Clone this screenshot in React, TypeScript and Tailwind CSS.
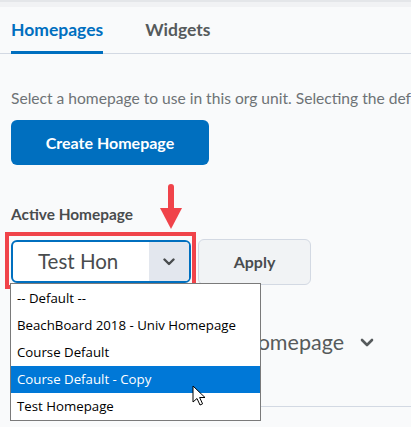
export default function App() {
  const options = [
    '-- Default --',
    'BeachBoard 2018 - Univ Homepage',
    'Course Default',
    'Course Default - Copy',
    'Test Homepage',
  ];

  return (
    <div className="relative w-[411px] h-[427px] overflow-hidden bg-[#f9fafb] font-['Lato',sans-serif]">
      {/* top strip */}
      <div className="h-[2px] bg-[#e4e6e9]" />
      <div className="h-[5px] bg-[#f1f2f4]" />

      {/* Tabs */}
      <div className="flex h-[47px] items-stretch gap-[42px] border-b border-[#d3d9e3] px-[11px]">
        <div className="relative flex items-center text-[17.5px] font-bold text-[#006fbf]">
          Homepages
          <span className="absolute left-0 right-0 bottom-[-1px] h-[3px] bg-[#006fbf]" />
        </div>
        <div className="flex items-center text-[17.5px] font-bold text-[#565a5c]">Widgets</div>
      </div>

      <div className="px-[11px]">
        <p className="mt-[35px] whitespace-nowrap text-[15.6px] leading-[19px] text-[#6e7376]">
          Select a homepage to use in this org unit. Selecting the default
        </p>

        <button className="mt-[12px] h-[45px] w-[198px] rounded-[6px] bg-[#006fbf] text-[16px] font-bold text-white">
          Create Homepage
        </button>

        <div className="mt-[40px] text-[15.4px] font-bold leading-[19px] text-[#494c4e]">Active Homepage</div>

        <div className="mt-[15px] flex items-start gap-[7px]">
          <div className="mt-[1px] flex h-[43px] w-[180px] overflow-hidden rounded-[6px] border-2 border-[#006fbf] bg-white">
            <div className="flex flex-1 items-center pl-[25px] text-[20.5px] text-[#494c4e]">Test Hon</div>
            <div className="flex w-[40px] items-center justify-center bg-[#e3e7ee]">
              <svg width="12" height="8" viewBox="0 0 12 8" fill="none">
                <path d="M1.5 1.5 6 6l4.5-4.5" stroke="#494c4e" strokeWidth="2.4" strokeLinecap="round" strokeLinejoin="round" />
              </svg>
            </div>
          </div>
          <button className="h-[46px] w-[113px] rounded-[6px] border border-[#d3d9e3] bg-[#f1f3f5] text-[16px] font-bold text-[#494c4e]">
            Apply
          </button>
        </div>

        <div className="mt-[42px] flex items-center gap-[16px] whitespace-nowrap text-[21.5px] leading-[30px] text-[#565a5c]">
          <span className="w-[333px] overflow-hidden text-right">Course Homepage</span>
          <svg width="14" height="9" viewBox="0 0 14 9" fill="none">
            <path d="M2 2l5 5 5-5" stroke="#565a5c" strokeWidth="2.6" strokeLinecap="round" strokeLinejoin="round" />
          </svg>
        </div>
      </div>

      <div className="mt-[49px] ml-[11px] h-px bg-[#d3d9e3]" />

      {/* Annotation: red highlight and arrow */}
      <div className="absolute left-[5px] top-[232px] h-[57px] w-[191px] border-4 border-[#f0434a]" />
      <svg className="absolute left-[159px] top-[184px]" width="24" height="46" viewBox="0 0 24 46">
        <path d="M12 3v24" stroke="#f0434a" strokeWidth="6" strokeLinecap="round" />
        <path d="M1 24h22L12 45z" fill="#f0434a" />
      </svg>

      {/* Open native list */}
      <div className="absolute left-[10px] top-[283px] w-[251px] border border-[#7a7a7a] bg-white pt-[1px] font-['Open_Sans',sans-serif] text-[13.25px]">
        {options.map((o, i) => (
          <div
            key={o}
            className={
              i === 3
                ? 'flex h-[27px] items-center bg-[#0078d7] pl-[6px] text-white'
                : 'flex h-[27px] items-center pl-[6px] text-black'
            }
          >
            {o}
          </div>
        ))}
      </div>

      {/* Mouse pointer */}
      <svg className="absolute left-[192px] top-[385px]" width="14" height="22" viewBox="0 0 14 22">
        <path
          d="M1 1v16l4-3.5 3 6.5 2.6-1.2-3-6.3H13z"
          fill="white"
          stroke="black"
          strokeWidth="1"
          strokeLinejoin="round"
        />
      </svg>
    </div>
  );
}
